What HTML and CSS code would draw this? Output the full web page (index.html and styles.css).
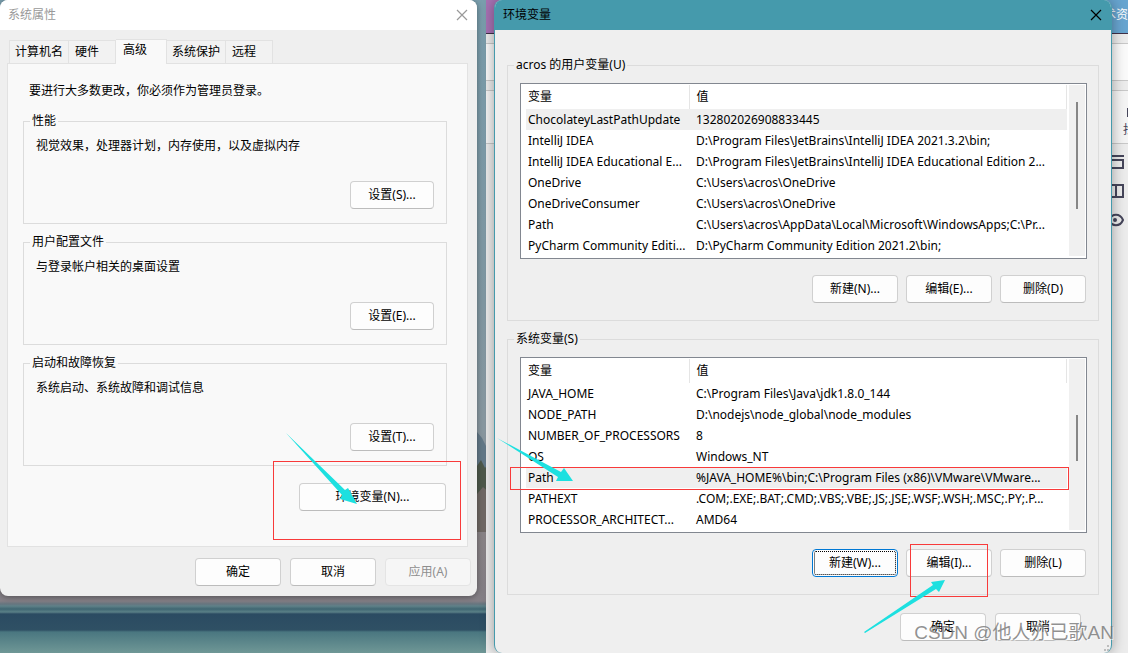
FILE: index.html
```html
<!DOCTYPE html>
<html lang="zh-CN">
<head>
<meta charset="utf-8">
<title>环境变量</title>
<link rel="stylesheet" href="styles.css">
</head>
<body>
<main class="desktop">
  <svg class="scenery" viewBox="0 0 16 100" preserveAspectRatio="none" aria-hidden="true">
    <path d="M0 0 5 6 10 16 16 22V100H0Z" fill="#647a8a"/>
    <path d="M0 34 4 28 8 36 12 31 16 38V100H0Z" fill="#4f5a4c"/>
    <path d="M0 62 6 55 16 64V100H0Z" fill="#716a66"/>
  </svg>

  <section class="backdrop" aria-hidden="true">
    <div class="back-title"><span>术资</span></div>
    <div class="back-band"></div>
    <div class="back-field"></div>
    <div class="back-band"></div>
    <div class="back-tool"><i class="stub"></i><span>找</span></div>
    <div class="back-side">
      <svg width="16" height="14" viewBox="0 0 16 14"><path d="M0 1H16M3 5H15V13H3Z"/></svg>
      <svg width="16" height="14" viewBox="0 0 16 14"><path d="M1 1H15V13H1ZM8 1V13"/></svg>
      <svg width="16" height="14" viewBox="0 0 16 14"><path d="M1 7C4 0 12 0 15 7 12 14 4 14 1 7Z"/><circle cx="7" cy="7" r="1"/></svg>
    </div>
  </section>

  <section class="window props">
    <header class="title-bar inactive">
      <h1>系统属性</h1>
      <button class="close" aria-label="关闭"><svg width="12" height="12" viewBox="0 0 12 12"><path d="M1 1 11 11M11 1 1 11"/></svg></button>
    </header>
    <div class="props-body">
      <nav class="tabs" role="tablist">
        <button class="tab" role="tab">计算机名</button>
        <button class="tab short" role="tab">硬件</button>
        <button class="tab selected" role="tab" aria-selected="true">高级</button>
        <button class="tab" role="tab">系统保护</button>
        <button class="tab short" role="tab">远程</button>
      </nav>
      <div class="panel">
        <p class="intro">要进行大多数更改，你必须作为管理员登录。</p>
        <fieldset class="group">
          <legend>性能</legend>
          <p>视觉效果，处理器计划，内存使用，以及虚拟内存</p>
          <button class="btn">设置(S)...</button>
        </fieldset>
        <fieldset class="group">
          <legend>用户配置文件</legend>
          <p>与登录帐户相关的桌面设置</p>
          <button class="btn">设置(E)...</button>
        </fieldset>
        <fieldset class="group">
          <legend>启动和故障恢复</legend>
          <p>系统启动、系统故障和调试信息</p>
          <button class="btn">设置(T)...</button>
        </fieldset>
        <div class="env">
          <button class="btn">环境变量(N)...</button>
          <span class="mark mark-env"></span>
          <svg class="arrow arrow-env" width="74" height="74" viewBox="0 0 74 74"><path d="M0 0 59 57 62 55 71 71 54 66 56 62Z"/></svg>
        </div>
      </div>
      <footer class="actions">
        <button class="btn">确定</button>
        <button class="btn">取消</button>
        <button class="btn" disabled>应用(A)</button>
      </footer>
    </div>
  </section>

  <section class="window vars">
    <header class="title-bar">
      <h1>环境变量</h1>
      <button class="close" aria-label="关闭"><svg width="12" height="12" viewBox="0 0 12 12"><path d="M1 1 11 11M11 1 1 11"/></svg></button>
    </header>
    <div class="vars-body">
      <fieldset class="group">
        <legend>acros 的用户变量(U)</legend>
        <div class="list">
          <table>
            <colgroup><col class="name"><col></colgroup>
            <thead><tr><th>变量</th><th>值</th></tr></thead>
            <tbody>
              <tr class="current"><td>ChocolateyLastPathUpdate</td><td>132802026908833445</td></tr>
              <tr><td>IntelliJ IDEA</td><td>D:\Program Files\JetBrains\IntelliJ IDEA 2021.3.2\bin;</td></tr>
              <tr><td>IntelliJ IDEA Educational E...</td><td>D:\Program Files\JetBrains\IntelliJ IDEA Educational Edition 2...</td></tr>
              <tr><td>OneDrive</td><td>C:\Users\acros\OneDrive</td></tr>
              <tr><td>OneDriveConsumer</td><td>C:\Users\acros\OneDrive</td></tr>
              <tr><td>Path</td><td>C:\Users\acros\AppData\Local\Microsoft\WindowsApps;C:\Pr...</td></tr>
              <tr><td>PyCharm Community Editi...</td><td>D:\PyCharm Community Edition 2021.2\bin;</td></tr>
            </tbody>
          </table>
          <div class="scroll"><i class="thumb"></i></div>
        </div>
        <div class="row">
          <button class="btn">新建(N)...</button>
          <button class="btn">编辑(E)...</button>
          <button class="btn">删除(D)</button>
        </div>
      </fieldset>
      <fieldset class="group">
        <legend>系统变量(S)</legend>
        <div class="list">
          <table>
            <colgroup><col class="name"><col></colgroup>
            <thead><tr><th>变量</th><th>值</th></tr></thead>
            <tbody>
              <tr><td>JAVA_HOME</td><td>C:\Program Files\Java\jdk1.8.0_144</td></tr>
              <tr><td>NODE_PATH</td><td>D:\nodejs\node_global\node_modules</td></tr>
              <tr><td>NUMBER_OF_PROCESSORS</td><td>8</td></tr>
              <tr><td>OS</td><td>Windows_NT</td></tr>
              <tr class="current"><td>Path</td><td>%JAVA_HOME%\bin;C:\Program Files (x86)\VMware\VMware...</td></tr>
              <tr><td>PATHEXT</td><td>.COM;.EXE;.BAT;.CMD;.VBS;.VBE;.JS;.JSE;.WSF;.WSH;.MSC;.PY;.P...</td></tr>
              <tr><td>PROCESSOR_ARCHITECT...</td><td>AMD64</td></tr>
            </tbody>
          </table>
          <div class="scroll lower"><i class="thumb"></i></div>
          <span class="mark mark-path"></span>
          <svg class="arrow arrow-path" width="78" height="48" viewBox="0 0 78 48"><path d="M0 0 64 34 67 30 76 43 59 43 61 39Z"/></svg>
        </div>
        <div class="row">
          <button class="btn focused">新建(W)...</button>
          <span class="edit">
            <button class="btn">编辑(I)...</button>
            <span class="mark mark-edit"></span>
            <svg class="arrow arrow-edit" width="82" height="54" viewBox="0 0 82 54"><path d="M0 52 69 5 67 2 81 0 75 12 72 9 1 53Z"/></svg>
          </span>
          <button class="btn">删除(L)</button>
        </div>
      </fieldset>
      <footer class="actions">
        <button class="btn">确定</button>
        <button class="btn">取消</button>
      </footer>
    </div>
    <svg class="grip" width="8" height="8" viewBox="0 0 8 8"><path d="M5 0h2v2H5zM2 4h2v2H2zM5 4h2v2H5z"/></svg>
  </section>
  <span class="watermark">CSDN @他人亦已歌AN</span>
</main>
</body>
</html>
```
FILE: styles.css
```css
* { box-sizing: border-box; }

body {
  margin: 0;
  overflow: hidden;
  font: 12px/16px "Noto Sans", "Noto Sans CJK SC", sans-serif;
  color: #000;
}

h1, p { margin: 0; font-size: 12px; font-weight: 400; }

button { font: inherit; color: inherit; }

/* Desktop and its windows */
.desktop {
  position: relative;
  display: grid;
  grid-template-columns: minmax(0, 477fr) 17px minmax(0, 618fr) 16px;
  align-items: start;
  min-height: 100vh;
  background: linear-gradient(#7a9fae 0, #8299a4 300px, #8b9aa3 430px, #8b8588 536px,
    #858087 601px, #66757f 604px, #5f8188 606px, #3f6672 609px, #5a8087 612px,
    #2b4b62 614px, #2f5064 630px, #4a7780 632px, #6f9796 653px);
}

.scenery {
  grid-area: 1 / 2;
  width: 16px;
  height: 100px;
  margin-top: 432px;
}

.window {
  position: relative;
  grid-row: 1;
  background: #efefef;
  border-radius: 8px;
  overflow: hidden;
}

.props { grid-column: 1; box-shadow: 0 1px 6px rgba(0, 0, 0, .4); }

.vars {
  grid-column: 3;
  border: solid #459aac;
  border-width: 0 1px;
  box-shadow: 0 0 14px rgba(0, 0, 0, .35);
}

.title-bar {
  display: flex;
  align-items: center;
  justify-content: space-between;
  height: 30px;
  padding: 0 9px 0 8px;
  background: #459aac;
}

.title-bar.inactive { background: #fff; color: #999; }

.close {
  display: flex;
  padding: 0;
  border: 0;
  background: none;
}

.close path { fill: none; stroke: currentColor; stroke-width: 1.2; }

/* Application behind the dialogs */
.backdrop {
  grid-area: 1 / 2 / 2 / 5;
  align-self: stretch;
  display: flex;
  flex-direction: column;
  margin-left: 9px;
  background: #ececec;
  color: #45455a;
}

.backdrop > div {
  display: flex;
  justify-content: flex-end;
  border-bottom: 1px solid #c8c8c8;
}

.backdrop > .back-title {
  height: 34px;
  padding-top: 7px;
  border-color: #403048;
  background: linear-gradient(90deg, #a872b4 10px, #68a5d0 90%);
  color: #fff;
}

.back-band { height: 10px; }
.back-field { height: 37px; background: #fafafa; }
.backdrop > .back-tool {
  flex-direction: column;
  justify-content: start;
  align-items: flex-end;
  gap: 5px;
  height: 53px;
  padding-top: 17px;
  overflow: hidden;
  background: #f4f4f4;
}

.back-tool span { width: 5px; }
.stub { width: 1px; height: 9px; background: #45455a; }

.backdrop > .back-side {
  flex: 1;
  flex-direction: column;
  justify-content: start;
  align-items: flex-end;
  gap: 15px;
  padding: 11px 4px 0 0;
  border: 0;
}

.back-side svg { fill: none; stroke: #45455a; stroke-width: 2; }

/* Buttons */
.btn {
  height: 28px;
  padding: 0;
  border: 1px solid #d0d0d0;
  border-bottom-color: #bcbcbc;
  border-radius: 4px;
  background: #fdfdfd;
}

.btn:disabled { color: #8e8e8e; border-color: #e4e4e4; background: #f6f6f6; }

.btn.focused {
  border-color: #0078d4;
  outline: 1px dotted #000;
  outline-offset: -3px;
}

/* Group boxes */
.group {
  display: flex;
  flex-direction: column;
  min-width: 0;
  margin: 0;
  border: 1px solid #dcdcdc;
}

.group legend { height: 16px; padding: 0 2px; }

/* System properties */
.props-body { padding: 9px 9px 10px 7px; }

.tabs { display: flex; align-items: flex-end; padding-left: 2px; }

.tab {
  height: 23px;
  padding: 0 5px;
  border: 1px solid #e2e2e2;
  border-bottom: 0;
  border-left-width: 0;
  background: #f2f2f2;
}

.tab:first-child { border-left-width: 1px; }
.tab.short { padding: 0 16px 0 6px; }
.tab.selected {
  height: 25px;
  margin-bottom: -1px;
  padding: 0 19px 4px 7px;
  background: #f9f9f9;
}

.panel {
  padding: 19px 20px 35px 15px;
  border: 1px solid #e2e2e2;
  background: #f9f9f9;
}

.intro { padding-left: 6px; margin-bottom: 14px; }

.props .group { padding: 9px 12px 14px; }
.props .group + .group { margin-top: 10px; }
.props .group legend { margin-left: -6px; }
.props .group .btn { align-self: flex-end; width: 84px; margin-top: 27px; }

.env { position: relative; width: 147px; margin: 17px 1px 0 auto; }
.env .btn { display: block; width: 100%; }

.actions { display: flex; justify-content: flex-end; gap: 9px; }
.actions .btn { width: 86px; }
.props .actions { margin: 11px -3px 0 0; }

/* Environment variables */
.vars-body { padding: 27px 12px 12px; }
.vars .group { padding: 10px 11px 17px 12px; }
.vars .group + .group { margin-top: 10px; }
.vars .group legend { margin-left: -6px; }
.vars .actions { margin: 18px 18px 0 0; }

.list {
  position: relative;
  display: flex;
  gap: 2px;
  padding: 1px 1px 2px 5px;
  border: 1px solid #828790;
  background: #fff;
}

.list table {
  flex: 1;
  min-width: 0;
  table-layout: fixed;
  border-collapse: collapse;
}

.list .name { width: 163px; }

.list th, .list td {
  height: 21px;
  padding: 0 0 0 2px;
  overflow: hidden;
  text-align: left;
  font-weight: 400;
  white-space: nowrap;
}

.list th { height: 24px; border-right: 1px solid #e5e5e5; }
.list th + th, .list td + td { padding-left: 7px; }
.list .current { background: #efefef; }

.scroll { width: 16px; padding: 17px 7px 0; background: #f0f0f0; }
.scroll.lower { padding-top: 56px; }
.thumb { display: block; height: 107px; background: #868686; }
.lower .thumb { height: 46px; }

.row {
  display: flex;
  justify-content: flex-end;
  gap: 8px;
  margin: 16px 1px 0 0;
}

.row .btn { width: 86px; }
.edit { position: relative; }

/* Annotations drawn over the windows */
.mark { position: absolute; border: 1px solid #f83a3a; pointer-events: none; }
.mark-env { left: -26px; top: -22px; width: 188px; height: 79px; }
.mark-path { left: -11px; right: 17px; top: 109px; height: 23px; }
.mark-edit { left: 4px; top: -5px; width: 78px; height: 53px; }

.arrow { position: absolute; fill: #1de0e0; pointer-events: none; }
.arrow-env { left: -13px; top: -50px; }
.arrow-path { left: -24px; top: 80px; }
.arrow-edit { left: -42px; top: 31px; }

.grip { position: absolute; right: 1px; bottom: 0; fill: #bdbdbd; }

.watermark {
  position: absolute;
  right: 14px;
  bottom: 6px;
  font: 19px/28px "Liberation Sans", "Noto Sans CJK SC", sans-serif;
  color: rgba(110, 110, 110, .75);
  text-shadow: 1px 1px 0 rgba(255, 255, 255, .6);
  white-space: nowrap;
}
```
